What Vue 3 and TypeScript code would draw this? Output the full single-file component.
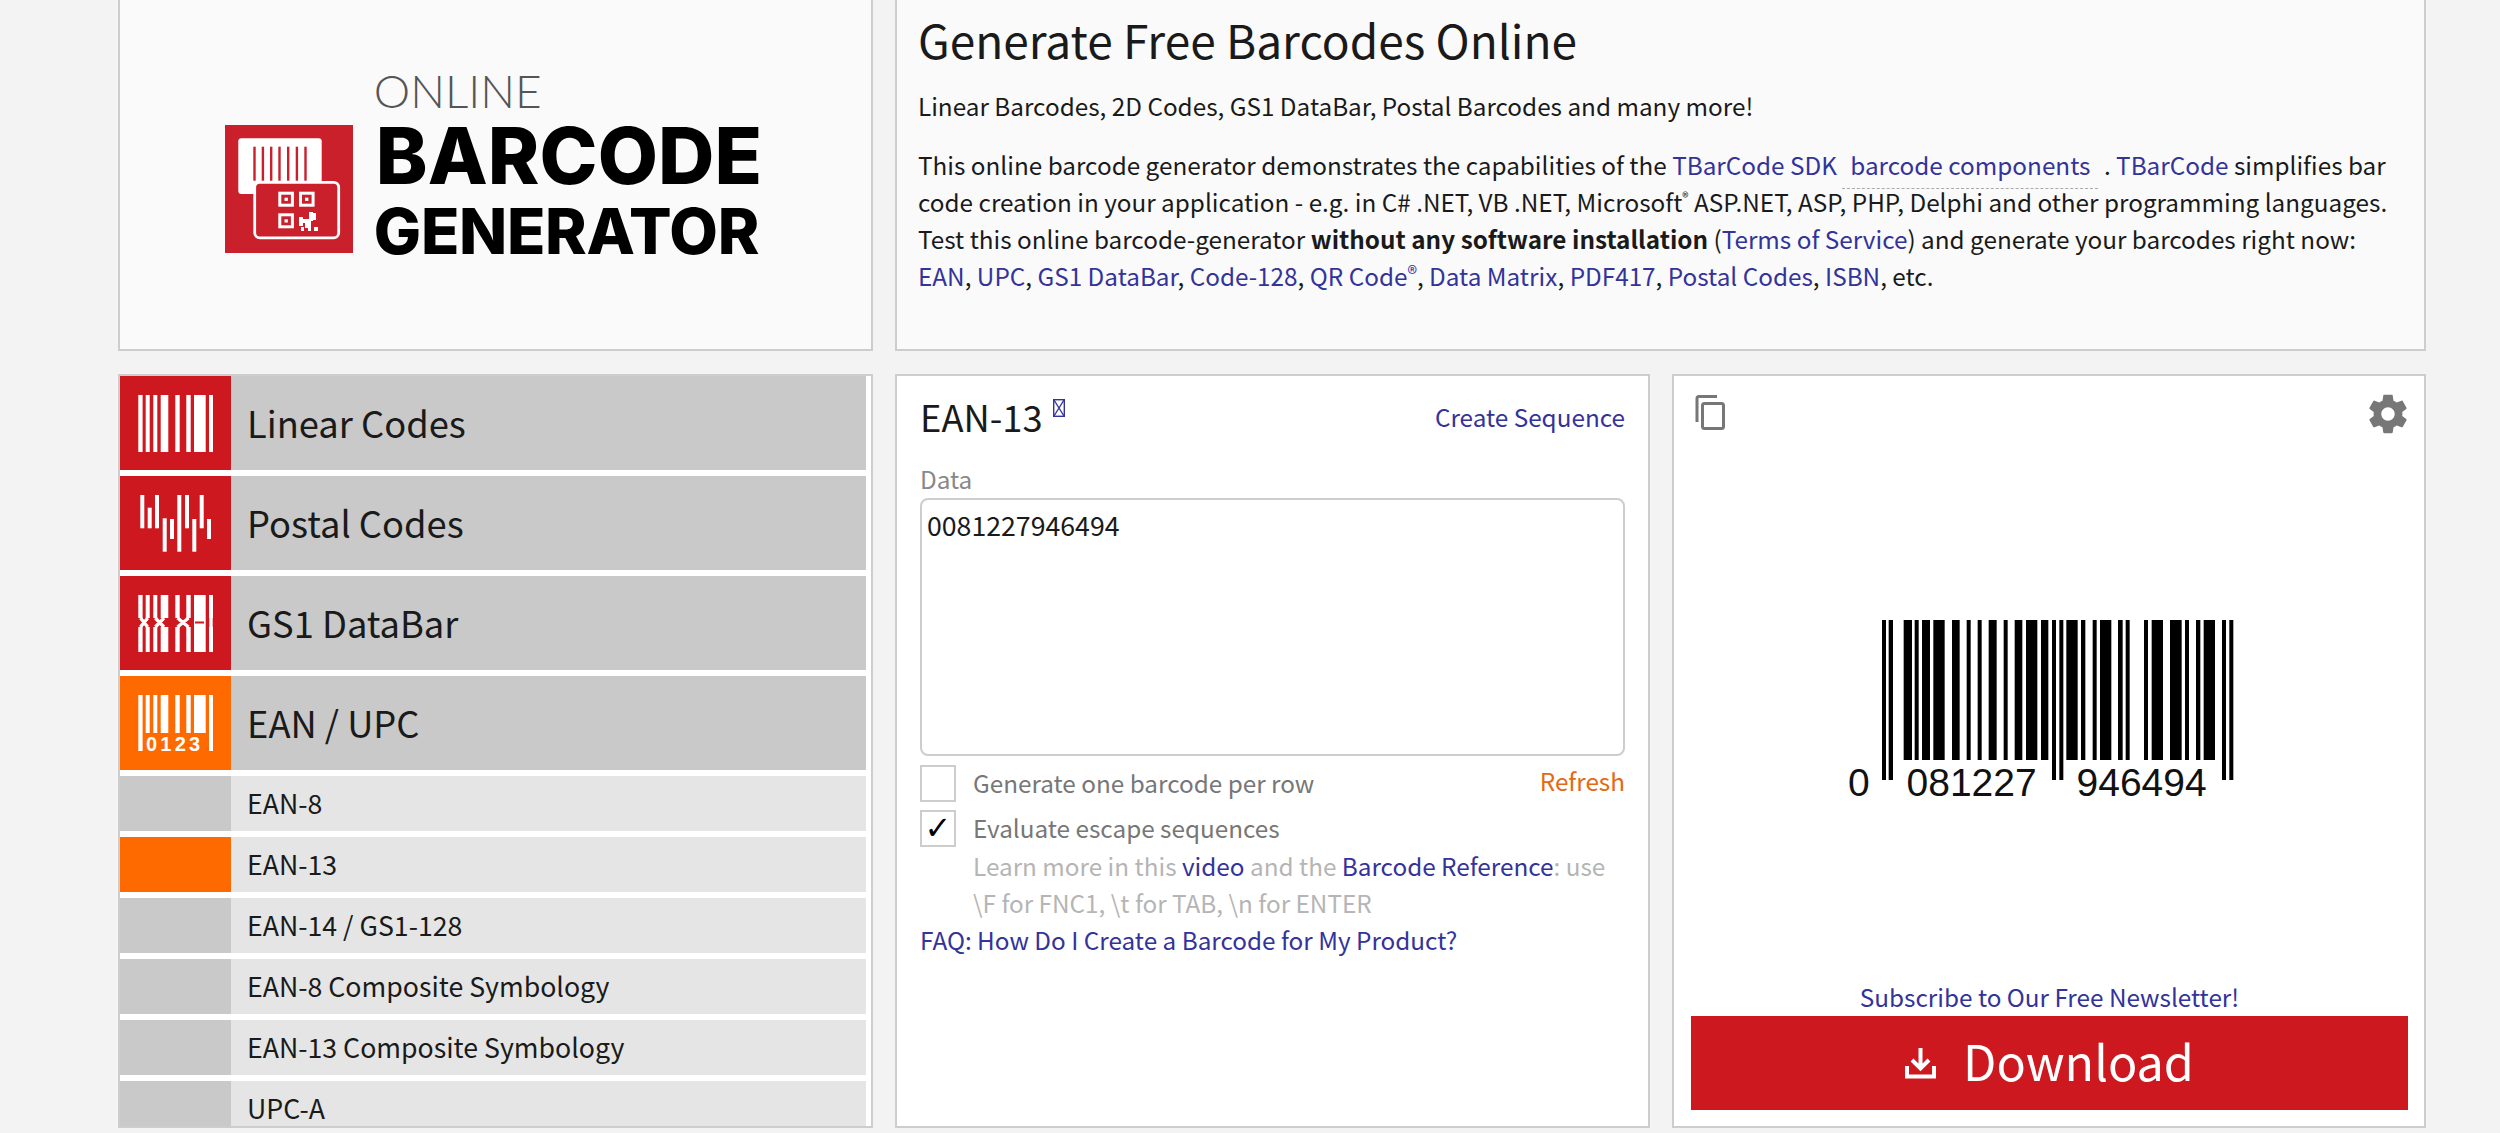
<script setup lang="ts">
const code = '0081227946494'
const navTop: { label: string; icon: string; active?: boolean }[] = [
  { label: 'Linear Codes', icon: 'linear' },
  { label: 'Postal Codes', icon: 'postal' },
  { label: 'GS1 DataBar', icon: 'gs1' },
  { label: 'EAN / UPC', icon: 'ean', active: true },
]
const navSub: { label: string; active?: boolean }[] = [
  { label: 'EAN-8' },
  { label: 'EAN-13', active: true },
  { label: 'EAN-14 / GS1-128' },
  { label: 'EAN-8 Composite Symbology' },
  { label: 'EAN-13 Composite Symbology' },
  { label: 'UPC-A' },
]
const iconBars: [number, number][] = [
  [18.3, 4.3], [25.7, 4], [33.3, 4], [40.7, 7.6], [55.3, 4.4], [66.3, 4.4], [74, 11.7], [89, 4],
]
const postalBars: [number, number, number][] = [
  [20.3, 19, 52.3], [27.7, 31.7, 52.3], [35, 19, 52.3], [42.7, 42.3, 75.7], [50, 43, 63], [57.3, 19, 75.7], [65, 19, 52.3], [72.3, 43, 75.7], [79.7, 19, 52.3], [87, 43, 63],
]
const bars: [number, number][] = [
  [65, 77], [85, 98], [130, 155], [163, 175], [185, 209], [219, 253], [275, 298], [319, 331], [352, 364], [385, 409], [430, 442], [463, 486], [497, 531], [542, 564], [575, 587], [597, 609], [618, 652], [662, 675], [697, 709], [719, 753], [773, 787], [796, 808], [851, 863], [874, 908], [929, 964], [974, 986], [1007, 1020], [1030, 1064], [1085, 1097], [1107, 1119],
]
const tall = new Set([0, 1, 14, 15, 28, 29])
const logoBars: number[] = [28.3, 36.7, 45, 53.3, 62, 70.7, 79.3]
</script>

<template>
  <div class="page">
    <section class="panel logo-panel">
      <div class="lockup">
        <svg class="mark" width="128" height="128" viewBox="0 0 128 128">
          <rect width="128" height="128" fill="#c9202c" />
          <rect x="13.3" y="13.3" width="83.4" height="55.7" rx="3" fill="#fff" />
          <rect v-for="b in logoBars" :key="b" :x="b" y="21.7" width="2.4" height="34" fill="#c9202c" />
          <rect x="29.7" y="57.4" width="84" height="55.4" rx="5" fill="#c9202c" stroke="#fff" stroke-width="2.8" />
          <g fill="none" stroke="#fff" stroke-width="3">
            <rect x="54.8" y="68.2" width="12.6" height="12" />
            <rect x="75.5" y="68.2" width="12.6" height="12" />
            <rect x="54.8" y="89.8" width="12.6" height="12" />
          </g>
          <g fill="#fff">
            <rect x="59.5" y="72.7" width="3.4" height="3.2" /><rect x="80" y="72.7" width="3.4" height="3.2" /><rect x="59.5" y="94.3" width="3.4" height="3.2" />
            <rect x="74" y="92" width="4" height="9" /><rect x="78" y="94" width="8" height="4" /><rect x="84" y="87" width="4" height="9" /><rect x="88" y="88" width="3" height="7" /><rect x="80" y="98" width="6" height="5" /><rect x="76" y="102" width="3" height="4" /><rect x="83" y="103" width="3" height="3" /><rect x="89" y="102" width="4" height="4" />
          </g>
        </svg>
        <div class="logo-text">
          <div class="l-online">ONLINE</div>
          <div class="l-barcode">BARCODE</div>
          <div class="l-generator">GENERATOR</div>
        </div>
      </div>
    </section>

    <section class="panel intro">
      <h1>Generate Free Barcodes Online</h1>
      <p class="lead">Linear Barcodes, 2D Codes, GS1 DataBar, Postal Barcodes and many more!</p>
      <p class="body">This online barcode generator demonstrates the capabilities of the <a>TBarCode SDK</a> <a class="dashed">barcode components</a> . <a>TBarCode</a> simplifies bar code creation in your application - e.g. in C# .NET, VB .NET, Microsoft<sup>®</sup> ASP.NET, ASP, PHP, Delphi and other programming languages. Test this online barcode-generator <b>without any software installation</b> (<a>Terms of Service</a>) and generate your barcodes right now:<br /><a>EAN</a>, <a>UPC</a>, <a>GS1 DataBar</a>, <a>Code-128</a>, <a>QR Code<span class="reg">®</span></a>, <a>Data Matrix</a>, <a>PDF417</a>, <a>Postal Codes</a>, <a>ISBN</a>, etc.</p>
    </section>

    <nav class="panel nav">
      <div v-for="n in navTop" :key="n.label" class="nav-top">
        <div class="nav-icon" :class="{ orange: n.active }">
          <svg width="111" height="94" viewBox="0 0 111 94" fill="#fff">
            <template v-if="n.icon === 'linear'">
              <rect v-for="b in iconBars" :key="b[0]" :x="b[0]" y="19" :width="b[1]" height="57" />
            </template>
            <template v-else-if="n.icon === 'postal'">
              <rect v-for="b in postalBars" :key="b[0]" :x="b[0]" :y="b[1]" width="4" :height="b[2] - b[1]" />
            </template>
            <template v-else-if="n.icon === 'gs1'">
              <rect v-for="b in iconBars" :key="b[0]" :x="b[0]" y="19" :width="b[1]" height="23" />
              <rect v-for="b in iconBars" :key="b[0] + 100" :x="b[0]" y="51" :width="b[1]" height="25" />
              <path d="M20.5 42 L27.7 51 M27.7 42 L20.5 51 M35.3 42 L44 51 M44 42 L35.3 51 M57.5 42 L68.5 51 M68.5 42 L57.5 51 M91 42 V51" fill="none" stroke="#fff" stroke-width="3.4" />
              <rect x="74" y="42" width="11.7" height="9" />
              <path d="M75 46.5 H84" stroke="#cc181e" stroke-width="2" />
            </template>
            <template v-else>
              <rect v-for="b in iconBars" :key="b[0]" :x="b[0]" y="19" :width="b[1]" :height="b[0] === 18.3 || b[0] === 89 ? 56 : 38" />
              <text class="ico-num" x="26" y="75">0123</text>
            </template>
          </svg>
        </div>
        <span>{{ n.label }}</span>
      </div>
      <div v-for="n in navSub" :key="n.label" class="nav-sub">
        <div class="nav-sub-icon" :class="{ orange: n.active }"></div>
        <span>{{ n.label }}</span>
      </div>
    </nav>

    <section class="panel form">
      <div class="title-row">
        <h2>EAN-13 <a class="tofu"><svg width="12" height="18" viewBox="0 0 12 18" fill="none" stroke="#33339a" stroke-width="1.4"><rect x=".7" y=".7" width="10.6" height="16.6" /><path d="M1 1 L11 17 M11 1 L1 17" /></svg></a></h2>
        <a class="seq">Create Sequence</a>
      </div>
      <label class="data-label">Data</label>
      <textarea class="data" readonly :value="code"></textarea>
      <div class="check-row first">
        <span class="box"></span>
        <span class="check-label">Generate one barcode per row</span>
        <a class="refresh">Refresh</a>
      </div>
      <div class="check-row second">
        <span class="box">✓</span>
        <span class="check-label">Evaluate escape sequences</span>
      </div>
      <p class="help">Learn more in this <a>video</a> and the <a>Barcode Reference</a>: use \F for FNC1, \t for TAB, \n for ENTER</p>
      <a class="faq">FAQ: How Do I Create a Barcode for My Product?</a>
    </section>

    <section class="panel output">
      <div class="tools">
        <svg width="30" height="35" viewBox="0 0 30 35" fill="none" stroke="#777" stroke-width="3">
          <path d="M2 27 V3.5 Q2 1.5 4 1.5 H22" />
          <rect x="7.5" y="8.5" width="21" height="25" rx="2" />
        </svg>
        <svg class="gear" width="46" height="46" viewBox="0 0 24 24" fill="#777">
          <path d="M19.43 12.98c.04-.32.07-.64.07-.98s-.03-.66-.07-.98l2.11-1.65c.19-.15.24-.42.12-.64l-2-3.46c-.12-.22-.39-.3-.61-.22l-2.49 1c-.52-.4-1.08-.73-1.69-.98l-.38-2.65C14.46 2.18 14.25 2 14 2h-4c-.25 0-.46.18-.49.42l-.38 2.65c-.61.25-1.17.59-1.69.98l-2.49-1c-.23-.09-.49 0-.61.22l-2 3.46c-.13.22-.07.49.12.64l2.11 1.65c-.04.32-.07.65-.07.98s.03.66.07.98l-2.11 1.65c-.19.15-.24.42-.12.64l2 3.46c.12.22.39.3.61.22l2.49-1c.52.4 1.08.73 1.69.98l.38 2.65c.03.24.24.42.49.42h4c.25 0 .46-.18.49-.42l.38-2.65c.61-.25 1.17-.59 1.69-.98l2.49 1c.23.09.49 0 .61-.22l2-3.46c.12-.22.07-.49-.12-.64l-2.11-1.65zM12 15.5c-1.93 0-3.5-1.57-3.5-3.5s1.57-3.5 3.5-3.5 3.5 1.57 3.5 3.5-1.57 3.5-3.5 3.5z" />
        </svg>
      </div>
      <div class="code-wrap">
        <svg width="366" height="185" viewBox="0 0 366 185">
          <g fill="#000">
            <rect v-for="(b, i) in bars" :key="b[0]" :x="(b[0] - 65) / 3 + 29" y="0" :width="(b[1] - b[0]) / 3" :height="tall.has(i) ? 160 : 140" />
          </g>
          <text class="code-num" x="-5" y="176">0</text>
          <text class="code-num" x="53.5" y="176">081227</text>
          <text class="code-num" x="223.5" y="176">946494</text>
        </svg>
      </div>
      <a class="subscribe">Subscribe to Our Free Newsletter!</a>
      <button class="download">
        <svg width="31" height="31" viewBox="0 0 31 31" fill="none" stroke="#fff" stroke-width="4">
          <path d="M15.5 0 V19 M7 12 L15.5 20.5 L24 12" />
          <path d="M2 18 V28.5 H29 V18" />
        </svg>
        <span>Download</span>
      </button>
    </section>
  </div>
</template>

<style>
html, body { margin: 0; background: #f3f3f3; }
</style>

<style scoped>
.page {
  width: 2308px;
  height: 1133px;
  margin-left: 118px;
  display: grid;
  grid-template-columns: 755px 755px 754px;
  grid-template-rows: 351px 754px;
  column-gap: 22px;
  row-gap: 23px;
  overflow: hidden;
  box-sizing: border-box;
  font-family: "Noto Sans CJK SC", "Noto Sans", sans-serif;
  color: #1a1a1a;
  font-size: 24.3px;
}
a { color: #33339a; }
.panel { border: 2px solid #cdcdcd; box-sizing: border-box; background: #fff; min-width: 0; }
.logo-panel, .intro { background: #fafafa; border-top: 0; }
.logo-panel { display: flex; justify-content: center; padding: 74px 4px 0 0; }
.lockup { display: flex; align-items: flex-start; gap: 21px; height: 180px; }
.mark { margin-top: 51px; flex: none; }
.logo-text { font-family: Inter, sans-serif; color: #000; }
.l-online { font-family: Lato, sans-serif; font-weight: 300; font-size: 46px; line-height: 33px; color: #555; height: 33px; }
.l-barcode { font-weight: 800; font-size: 78px; line-height: 57px; margin-top: 20px; margin-left: 2px; letter-spacing: 0.1px; }
.l-generator { font-weight: 800; font-size: 63px; line-height: 46px; margin-top: 24px; letter-spacing: -0.3px; }

.intro { grid-column: 2 / 4; padding: 0 12px 0 21px; }
h1 { margin: 0; font-weight: 400; font-size: 46px; line-height: 60px; margin-top: 9px; }
.lead { margin: 0; line-height: 37px; margin-top: 18px; }
.body { margin: 22px 0 0; line-height: 37px; }
.body sup { font-size: 13px; line-height: 0; vertical-align: 10px; }
.reg { font-size: 20px; line-height: 0; vertical-align: 5px; }
.dashed { padding: 0 8px 6px; border-bottom: 1px dashed #aaa; }
.body b { font-weight: 700; }

.nav { padding: 0 5px 0 0; overflow: hidden; display: flex; flex-direction: column; gap: 6px; }
.nav-top { flex: none; height: 94px; display: flex; align-items: center; background: #c9c9c9; font-size: 36.3px; }
.nav-icon { width: 111px; height: 94px; background: #cc181e; flex: none; }
.nav-icon.orange, .nav-sub-icon.orange { background: #ff6a00; }
.nav-icon svg { display: block; }
.nav-top span { margin-left: 16px; padding-bottom: 3px; }
.nav-sub { flex: none; height: 55px; display: flex; align-items: center; background: #e5e5e5; font-size: 26.7px; }
.nav-sub-icon { width: 111px; height: 55px; background: #c9c9c9; flex: none; }
.nav-sub span { margin-left: 16px; padding-bottom: 3px; }
.ico-num { font-family: "Liberation Sans", sans-serif; font-weight: 700; font-size: 20px; letter-spacing: 3.2px; fill: #fff; }

.form { padding: 0 23px; display: flex; flex-direction: column; }
.title-row { display: flex; justify-content: space-between; align-items: flex-start; height: 85px; }
h2 { margin: 0; font-weight: 400; font-size: 36.3px; line-height: 50px; margin-top: 15px; position: relative; }
.tofu { position: absolute; left: 133px; top: 8px; }
.tofu svg { display: block; }
.seq { line-height: 36px; margin-top: 23px; }
.data-label { color: #888; line-height: 36px; height: 37px; }
.data {
  display: block;
  height: 258px;
  box-sizing: border-box;
  border: 2px solid #cdcdcd;
  border-radius: 8px;
  padding: 7px 5px;
  resize: none;
  outline: none;
  font: inherit;
  font-size: 26.7px;
  line-height: 36px;
  color: #1a1a1a;
}
.check-row { display: flex; align-items: flex-start; color: #777; }
.check-row.first { margin-top: 9px; height: 45px; }
.check-row.second { height: 37px; }
.box {
  width: 36px; height: 37px; box-sizing: border-box; border: 2px solid #cdcdcd; background: #fff;
  color: #000; font-family: "DejaVu Sans", sans-serif; font-size: 32px; line-height: 33px; text-align: center; flex: none;
}
.check-label { margin-left: 17px; line-height: 36px; }
.refresh { margin-left: auto; color: #e36a12; line-height: 31px; }
.help { margin: 0 0 0 53px; color: #b5b5b5; line-height: 37px; }
.faq { line-height: 37px; }

.output { padding: 0 16px 0 17px; display: flex; flex-direction: column; }
.tools { display: flex; justify-content: space-between; align-items: flex-start; padding: 19px 0 0 4px; height: 80px; box-sizing: border-box; flex: none; }
.gear { margin: -4px -3px 0 0; }
.code-wrap { height: 519px; flex: none; display: flex; justify-content: center; padding: 164px 28px 0 0; box-sizing: border-box; }
.code-wrap svg { display: block; overflow: visible; }
.code-num { font-family: "Liberation Sans", sans-serif; font-size: 39px; fill: #111; }
.subscribe { text-align: center; line-height: 36px; height: 41px; padding-top: 4px; box-sizing: border-box; flex: none; }
.download {
  flex: none; height: 94px; background: #cc181e; border: 0; color: #fff; font: inherit; font-size: 48.5px;
  display: flex; align-items: center; justify-content: center; gap: 27px; padding: 0;
}
.download span { padding-bottom: 6px; }
</style>
